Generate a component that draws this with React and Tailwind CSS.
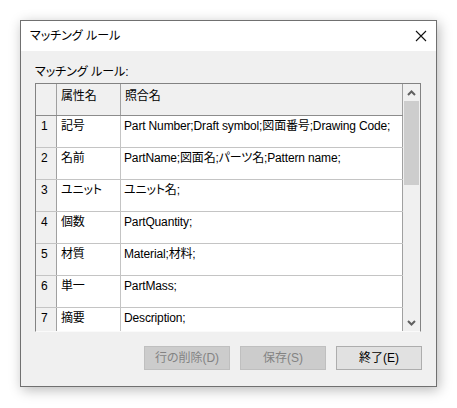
const rows = [
  { no: '1', attr: '記号', name: 'Part Number;Draft symbol;図面番号;Drawing Code;' },
  { no: '2', attr: '名前', name: 'PartName;図面名;パーツ名;Pattern name;' },
  { no: '3', attr: 'ユニット', name: 'ユニット名;' },
  { no: '4', attr: '個数', name: 'PartQuantity;' },
  { no: '5', attr: '材質', name: 'Material;材料;' },
  { no: '6', attr: '単一', name: 'PartMass;' },
  { no: '7', attr: '摘要', name: 'Description;' },
]

const font = "font-['Liberation_Sans','Noto_Sans_CJK_JP',sans-serif] [font-feature-settings:'palt']"

const Chevron = ({ down }) => (
  <svg width="9" height="6" viewBox="0 0 9 6" className={down ? 'rotate-180' : ''}>
    <path d="M1 5 L4.5 1.5 L8 5" fill="none" stroke="#606060" strokeWidth="2" />
  </svg>
)

const Button = ({ children, disabled }) => (
  <button
    disabled={disabled}
    className={`w-[86px] h-[24px] border text-[12px] leading-none
      ${disabled
        ? 'bg-[#cccccc] border-[#bfbfbf] text-[#838383]'
        : 'bg-[#e1e1e1] border-[#adadad] text-black'}`}
  >
    {children}
  </button>
)

export default function App() {
  return (
    <div className={`w-[457px] h-[408px] bg-white pt-[20px] pl-[20px] ${font}`}>
      <div className="w-[417px] h-[367px] border border-[#707070] flex flex-col shadow-[2px_3px_12px_rgba(0,0,0,0.28)]">
        {/* Title bar */}
        <div className="h-[30px] bg-white flex items-center justify-between pl-[9px] pr-[9px] shrink-0">
          <span className="text-[12px] text-black">マッチング ルール</span>
          <svg width="12" height="12" viewBox="0 0 12 12">
            <path d="M1 1 L11 11 M11 1 L1 11" stroke="#111" strokeWidth="1.1" />
          </svg>
        </div>

        {/* Body */}
        <div className="flex-1 bg-[#f0f0f0] px-[14px] pt-[13px]">
          <div className="text-[12px] leading-[16px] text-black">マッチング ルール:</div>

          {/* Grid */}
          <div className="mt-[3px] w-[386px] h-[249px] border-t border-l border-r border-[#828282] border-b-[#fafafa] border-b flex overflow-hidden bg-white">
            <div className="flex-1 flex flex-col text-[12px] text-black tracking-[-0.15px]">
              <div className="flex h-[32px] shrink-0 bg-[#f0f0f0] border-b border-[#8c8c8c]">
                <div className="w-[21px] border-r border-[#a0a0a0]" />
                <div className="w-[64px] border-r border-[#a0a0a0] pl-[4px] pt-[4px] leading-[16px]">属性名</div>
                <div className="flex-1 border-r border-[#a0a0a0] pl-[4px] pt-[4px] leading-[16px]">照合名</div>
              </div>
              {rows.map((r) => (
                <div key={r.no} className="flex h-[32px] shrink-0 border-b border-[#c4c4c4]">
                  <div className="w-[21px] bg-[#f0f0f0] border-r border-[#a0a0a0] pl-[5px] pt-[2px] leading-[16px]">{r.no}</div>
                  <div className="w-[64px] border-r border-[#c4c4c4] pl-[4px] pt-[2px] leading-[16px]">{r.attr}</div>
                  <div className="flex-1 border-r border-[#a0a0a0] pl-[3px] pt-[2px] leading-[16px] whitespace-nowrap">{r.name}</div>
                </div>
              ))}
            </div>

            {/* Scrollbar */}
            <div className="w-[17px] bg-[#f0f0f0] flex flex-col items-center shrink-0">
              <div className="h-[17px] w-full flex items-center justify-center">
                <Chevron />
              </div>
              <div className="w-[15px] h-[84px] bg-[#cdcdcd]" />
              <div className="flex-1" />
              <div className="h-[17px] w-full flex items-center justify-center">
                <Chevron down />
              </div>
            </div>
          </div>

          {/* Buttons */}
          <div className="flex justify-end gap-[10px] mt-[14px]">
            <Button disabled>行の削除(D)</Button>
            <Button disabled>保存(S)</Button>
            <Button>終了(E)</Button>
          </div>
        </div>
      </div>
    </div>
  )
}
